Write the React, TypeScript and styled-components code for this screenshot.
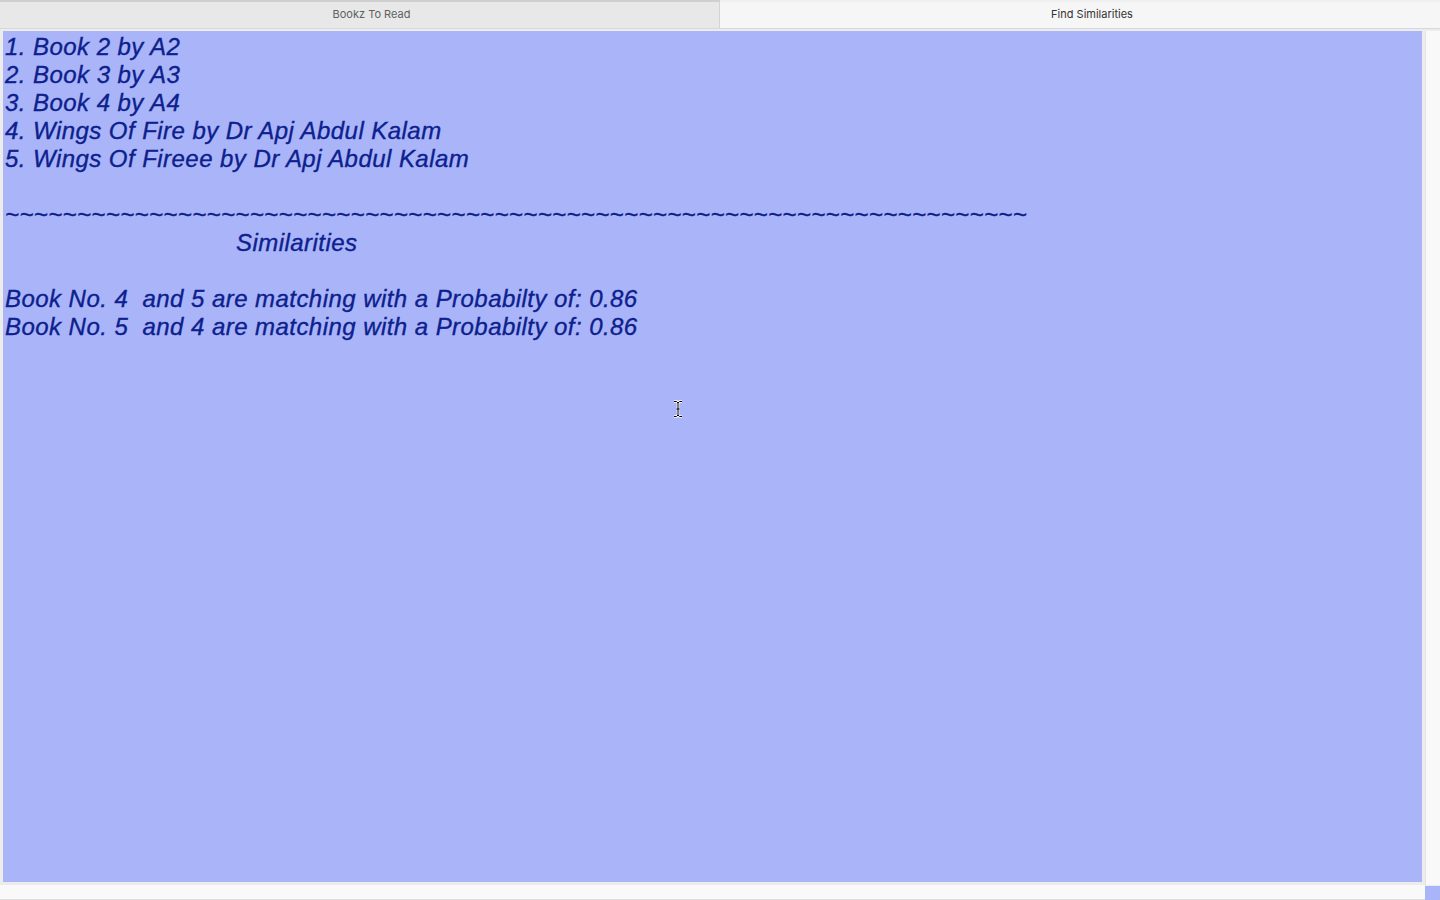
import React from "react";
import styled, { createGlobalStyle } from "styled-components";

const GlobalStyle = createGlobalStyle`
  html, body {
    margin: 0;
    padding: 0;
    background: #ececec;
  }
  * {
    box-sizing: border-box;
  }
`;

const Window = styled.div`
  width: 1440px;
  height: 900px;
  display: flex;
  flex-direction: column;
  overflow: hidden;
  position: relative;
`;

const TabBar = styled.div`
  display: grid;
  grid-template-columns: 720px 720px;
  height: 29px;
  flex: none;
  border-bottom: 1px solid #d8d8d8;
`;

const Tab = styled.div<{ $active?: boolean }>`
  display: flex;
  align-items: center;
  justify-content: center;
  background: ${(p) => (p.$active ? "#f6f6f6" : "#e8e8e8")};
  border-top: 2px solid ${(p) => (p.$active ? "#f0f0f0" : "#cfcfcf")};
  border-right: ${(p) => (p.$active ? "none" : "1px solid #d4d4d4")};
  font-family: "Inter", "Liberation Sans", sans-serif;
  font-size: 11px;
  color: ${(p) => (p.$active ? "#333" : "#606060")};
  padding: 0 0 2px 24px;
`;

const Body = styled.div`
  flex: none;
  display: grid;
  grid-template-columns: 1425px 15px;
  grid-template-rows: 854px 15px;
  padding-top: 2px;
`;

const EditorFrame = styled.div`
  padding: 0 3px 3px 3px;
  background: #ececec;
  display: flex;
`;

const Editor = styled.div`
  flex: 1;
  background: #a9b5f8;
  padding: 2px 0 0 2px;
  font-family: "Liberation Sans", Arial, sans-serif;
  font-style: italic;
  font-size: 24px;
  line-height: 28px;
  letter-spacing: 0.45px;
  -webkit-text-stroke: 0.35px #0d208e;
  color: #0d208e;
  white-space: pre;
  position: relative;
`;

const Line = styled.div<{ $indent?: number; $spacing?: number }>`
  height: 28px;
  padding-left: ${(p) => p.$indent ?? 0}px;
  ${(p) => (p.$spacing !== undefined ? `letter-spacing: ${p.$spacing}px;` : "")}
`;

const VScroll = styled.div`
  background: #f9f9f9;
  border-left: 1px solid #e4e4e4;
`;

const HScroll = styled.div`
  background: #f9f9f9;
  border-bottom: 1px solid #dedede;
`;

const Corner = styled.div`
  background: #a9b5f8;
  margin-top: 1px;
`;

const Cursor = styled.svg`
  position: absolute;
  left: 673px;
  top: 400px;
`;

const books = [
  "1. Book 2 by A2",
  "2. Book 3 by A3",
  "3. Book 4 by A4",
  "4. Wings Of Fire by Dr Apj Abdul Kalam",
  "5. Wings Of Fireee by Dr Apj Abdul Kalam",
];

const matches = [
  "Book No. 4  and 5 are matching with a Probabilty of: 0.86",
  "Book No. 5  and 4 are matching with a Probabilty of: 0.86",
];

const App: React.FC = () => {
  return (
    <Window>
      <GlobalStyle />
      <TabBar>
        <Tab>Bookz To Read</Tab>
        <Tab $active>Find Similarities</Tab>
      </TabBar>
      <Body>
        <EditorFrame>
          <Editor>
            {books.map((b) => (
              <Line key={b}>{b}</Line>
            ))}
            <Line />
            <Line $spacing={0.38}>{"~".repeat(71)}</Line>
            <Line $indent={231}>Similarities</Line>
            <Line />
            {matches.map((m) => (
              <Line key={m}>{m}</Line>
            ))}
          </Editor>
        </EditorFrame>
        <VScroll />
        <HScroll />
        <Corner />
      </Body>
      <Cursor width="10" height="18" viewBox="0 0 10 18">
        <path
          d="M1 1.5h2.5L5 3l1.5-1.5H9M5 3v12M1 16.5h2.5L5 15l1.5 1.5H9M3.5 9h3"
          fill="none"
          stroke="#fff"
          strokeWidth="2.5"
        />
        <path
          d="M1 1.5h2.5L5 3l1.5-1.5H9M5 3v12M1 16.5h2.5L5 15l1.5 1.5H9M3.5 9h3"
          fill="none"
          stroke="#000"
          strokeWidth="1"
        />
      </Cursor>
    </Window>
  );
};

export default App;
